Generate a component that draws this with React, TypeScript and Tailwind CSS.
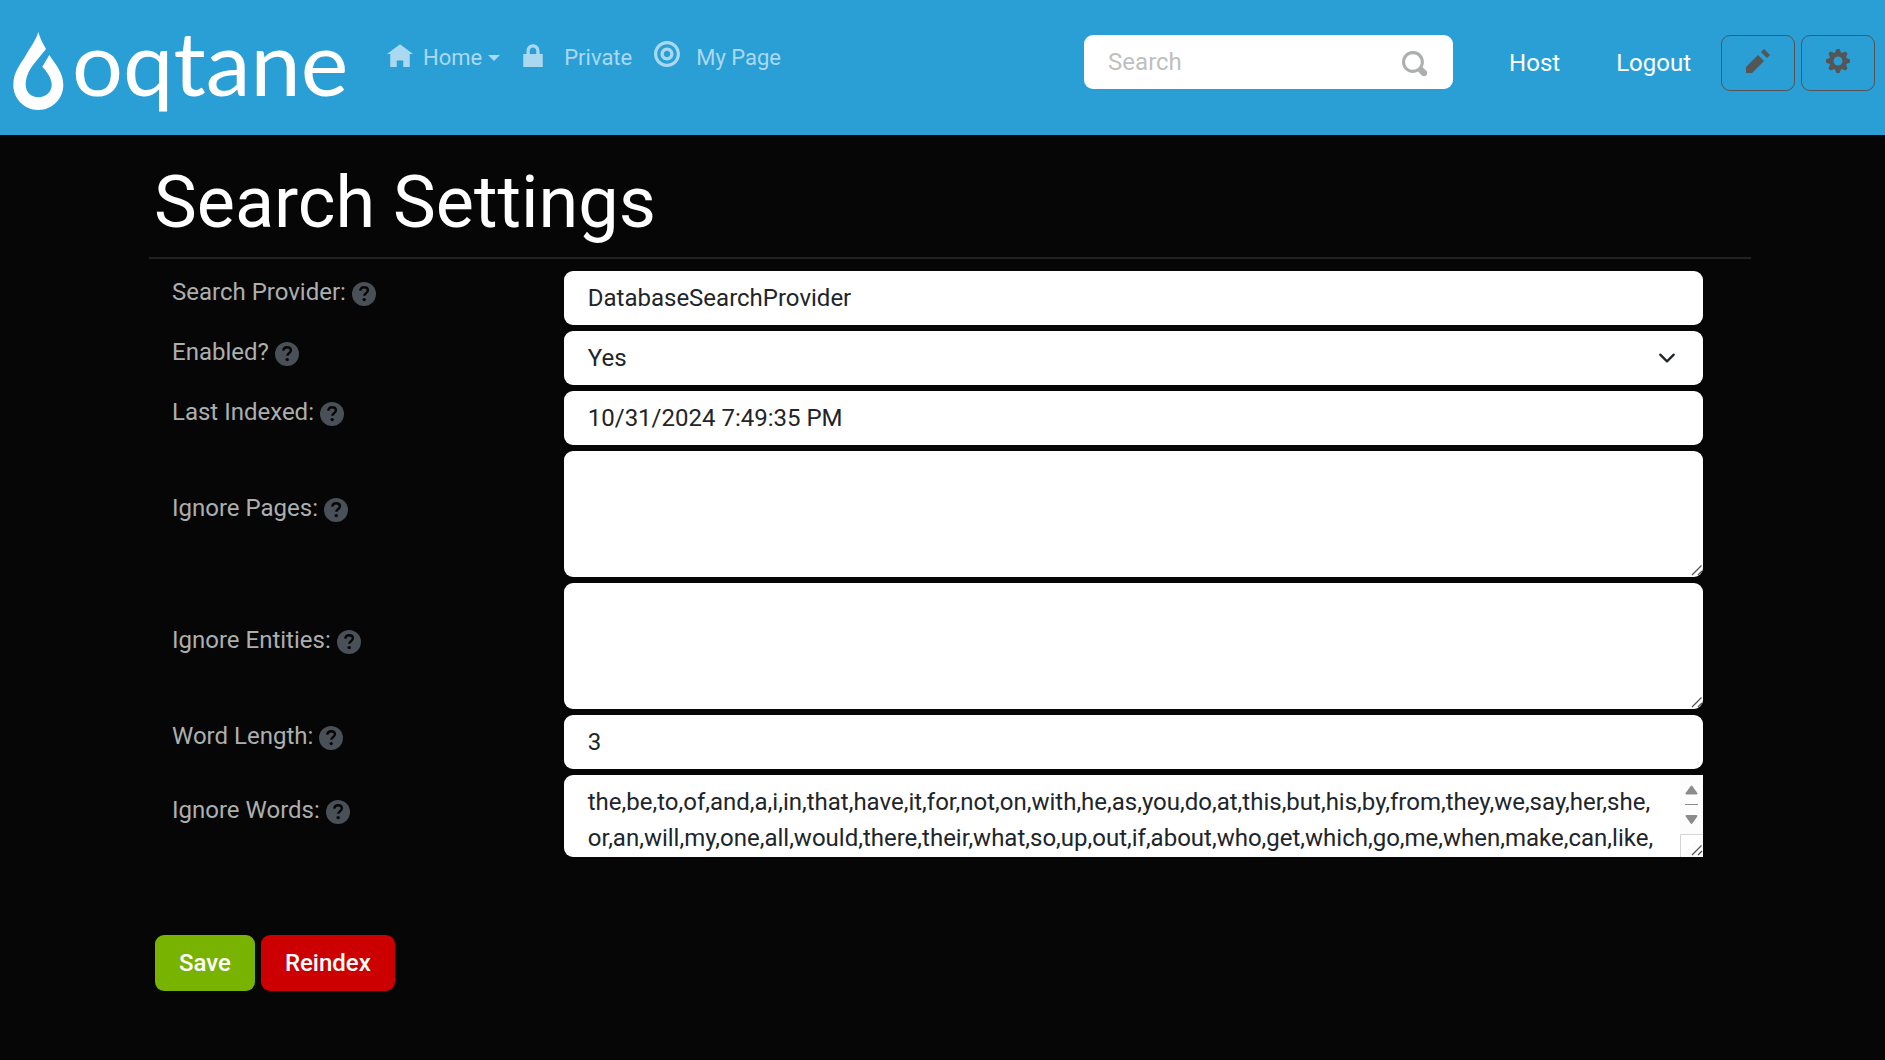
import type { ReactNode } from 'react';

const ICONS = {
  home: 'M4 1l-4 3h1v4h2v-2h2v2h2v-4.03l1 .03-4-3z',
  lock: 'M4 1c-1.1 0-2 .9-2 2v1h-1v4h6v-4h-1v-1c0-1.1-.9-2-2-2zm0 1c.56 0 1 .44 1 1v1h-2v-1c0-.56.44-1 1-1z',
  target:
    'M4 0c-2.2 0-4 1.8-4 4s1.8 4 4 4 4-1.8 4-4-1.8-4-4-4zm0 1c1.66 0 3 1.34 3 3s-1.34 3-3 3-3-1.34-3-3 1.34-3 3-3zm0 1c-1.1 0-2 .9-2 2s.9 2 2 2 2-.9 2-2-.9-2-2-2zm0 1c.56 0 1 .44 1 1s-.44 1-1 1-1-.44-1-1 .44-1 1-1z',
  search:
    'M3.5 0c-1.93 0-3.5 1.57-3.5 3.5s1.57 3.5 3.5 3.5c.59 0 1.17-.14 1.66-.41a1 1 0 0 0 .13.13l1 1a1.02 1.02 0 1 0 1.44-1.44l-1-1a1 1 0 0 0-.16-.13c.27-.49.44-1.06.44-1.66 0-1.93-1.55-3.5-3.5-3.5zm0 1c1.39 0 2.5 1.11 2.5 2.5 0 .66-.24 1.27-.66 1.72-.01.01-.02.02-.03.03a1 1 0 0 0-.13.13c-.44.4-1.04.63-1.69.63-1.39 0-2.5-1.11-2.5-2.5s1.11-2.5 2.5-2.5z',
  pencil: 'M6 0l-1 1 2 2 1-1-2-2zm-2 2l-4 4v2h2l4-4-2-2z',
  cog: 'M3.5 0l-.5 1.19c-.1.03-.19.08-.28.13l-1.19-.5-.72.72.5 1.19c-.05.1-.09.18-.13.28l-1.19.5v1l1.19.5c.04.1.08.18.13.28l-.5 1.19.72.72 1.19-.5c.09.04.18.09.28.13l.5 1.19h1l.5-1.19c.09-.04.19-.08.28-.13l1.19.5.72-.72-.5-1.19c.04-.09.09-.19.13-.28l1.19-.5v-1l-1.19-.5c-.03-.09-.08-.19-.13-.28l.5-1.19-.72-.72-1.19.5c-.09-.04-.19-.09-.28-.13l-.5-1.19h-1zm.5 2.5c.83 0 1.5.67 1.5 1.5s-.67 1.5-1.5 1.5-1.5-.67-1.5-1.5.67-1.5 1.5-1.5z',
};

function Icon({ name, className }: { name: keyof typeof ICONS; className: string }) {
  return (
    <svg viewBox="0 0 8 8" fill="currentColor" aria-hidden="true" className={className}>
      <path d={ICONS[name]} />
    </svg>
  );
}

function HelpIcon() {
  return (
    <svg viewBox="0 0 24 24" aria-hidden="true" className="size-6 shrink-0">
      <circle cx="12" cy="12" r="12" fill="#495057" />
      <path
        d="M8.2 8.6C8.6 6.4 10 5.2 12.1 5.2c2.2 0 3.8 1.3 3.8 3.1 0 1.4-.8 2.2-1.9 2.9-1.2.8-1.7 1.3-1.7 2.6"
        fill="none"
        stroke="#060606"
        strokeWidth="2.4"
      />
      <circle cx="12.2" cy="17.6" r="1.7" fill="#060606" />
    </svg>
  );
}

function Logo() {
  return (
    <a href="#" aria-label="oqtane" className="flex h-[135px] w-[347px] shrink-0 items-start pl-3 pt-8 text-white">
      <svg viewBox="0 0 52 78" fill="currentColor" aria-hidden="true" className="h-[78px] w-[52px] shrink-0">
        <path d="M26.3 0C28 6 31 12 34 17L21 33C16 40 13.700 46 13.700 53C13.700 60 19 65.300 26.300 65.300S39.700 60 39.700 53C39.700 46 35 40 30.300 34.700L37.300 23C43 32 51.300 40 51.300 53C51.300 67 40 78 26.300 78S1.300 67 1.300 53C1.300 40 8 33 14 23C19 14 24 8 26.300 0z" />
      </svg>
      <span className="ml-2 mt-[-15px] font-['Lato'] text-[90px] leading-[88px]">oqtane</span>
    </a>
  );
}

function Grip() {
  return (
    <svg
      viewBox="0 0 12 12"
      aria-hidden="true"
      className="pointer-events-none absolute bottom-px right-0 size-3"
      fill="none"
      stroke="#555555"
      strokeWidth="1.3"
    >
      <path d="M1 11L10.500 1.500M7 11L11 7" />
    </svg>
  );
}

function Row({ id, label, children }: { id: string; label: string; children: ReactNode }) {
  return (
    <div className="grid grid-cols-[1fr_3fr] items-center gap-3">
      <label htmlFor={id} className="flex items-center gap-[6px] pb-3 text-[#adafae]">
        {label}
        <span className="pt-1">
          <HelpIcon />
        </span>
      </label>
      <div className="relative flex">{children}</div>
    </div>
  );
}

const field = 'block w-full rounded-[9px] bg-white px-6 text-2xl leading-9 text-[#212529] outline-none';

const WORDS =
  'the,be,to,of,and,a,i,in,that,have,it,for,not,on,with,he,as,you,do,at,this,but,his,by,from,they,we,say,her,she,or,an,will,my,one,all,would,there,their,what,so,up,out,if,about,who,get,which,go,me,when,make,can,like,';

export default function App() {
  return (
    <div className="min-h-screen bg-[#060606] font-['Roboto',sans-serif] text-2xl leading-9 text-[#adafae]">
      <header className="flex h-[135px] items-start bg-[#2a9fd6]">
        <Logo />
        <nav className="flex items-start pl-10 pt-10 text-[22px] text-[#aad9ef]">
          <a href="#" className="flex items-center">
            <Icon name="home" className="mb-2 size-[26px]" />
            <span className="ml-[10px]">Home</span>
            <span className="ml-[6px] border-x-[6px] border-t-[6px] border-x-transparent border-t-current" />
          </a>
          <a href="#" className="ml-5 flex items-center">
            <Icon name="lock" className="mb-2 size-[26px]" />
            <span className="ml-[18px]">Private</span>
          </a>
          <a href="#" className="ml-[22px] flex items-center">
            <Icon name="target" className="mb-2 size-[26px]" />
            <span className="ml-4">My Page</span>
          </a>
        </nav>
        <div className="ml-auto flex items-start pr-[10px] pt-[35px] text-white">
          <form className="relative w-[369px]" onSubmit={(e) => e.preventDefault()}>
            <input
              type="search"
              aria-label="Search"
              placeholder="Search"
              className="block h-[54px] w-full rounded-[9px] bg-white pl-6 pr-16 text-2xl text-[#212529] outline-none placeholder:text-[#bfbfbf]"
            />
            <button type="submit" aria-label="Search" className="absolute right-[26px] top-4 text-[#adafae]">
              <Icon name="search" className="size-[25px]" />
            </button>
          </form>
          <a href="#" className="ml-14 mt-[10px]">
            Host
          </a>
          <a href="#" className="ml-14 mt-[10px]">
            Logout
          </a>
          <div className="ml-[30px] flex gap-[6px] text-[#555555]">
            <button
              type="button"
              aria-label="Edit"
              className="flex h-14 w-[74px] justify-center rounded-[9px] border border-[#555555] pt-[13px]"
            >
              <Icon name="pencil" className="size-6" />
            </button>
            <button
              type="button"
              aria-label="Control panel"
              className="flex h-14 w-[74px] justify-center rounded-[9px] border border-[#555555] pt-[13px]"
            >
              <Icon name="cog" className="size-6" />
            </button>
          </div>
        </div>
      </header>

      <main className="pb-16 pl-[149px] pr-[134px] pt-[25px]">
        <h1 className="border-b-2 border-[#222222] pb-[11px] pl-[5px] text-7xl leading-[86px] text-white">
          Search Settings
        </h1>

        <form onSubmit={(e) => e.preventDefault()}>
          <div className="flex flex-col gap-[6px] pl-[23px] pr-12 pt-3">
            <Row id="provider" label="Search Provider:">
              <input id="provider" type="text" defaultValue="DatabaseSearchProvider" className={`${field} h-[54px]`} />
            </Row>
            <Row id="enabled" label="Enabled?">
              <select id="enabled" defaultValue="Yes" className={`${field} h-[54px] appearance-none`}>
                <option>Yes</option>
                <option>No</option>
              </select>
              <svg
                viewBox="0 0 16 16"
                aria-hidden="true"
                className="pointer-events-none absolute right-[27px] top-[18px] size-[18px]"
                fill="none"
                stroke="#212529"
                strokeWidth="2"
                strokeLinecap="round"
                strokeLinejoin="round"
              >
                <path d="m2 5 6 6 6-6" />
              </svg>
            </Row>
            <Row id="indexed" label="Last Indexed:">
              <input id="indexed" type="text" defaultValue="10/31/2024 7:49:35 PM" className={`${field} h-[54px]`} />
            </Row>
            <Row id="pages" label="Ignore Pages:">
              <textarea id="pages" className={`${field} h-[126px] resize-none py-2`} />
              <Grip />
            </Row>
            <Row id="entities" label="Ignore Entities:">
              <textarea id="entities" className={`${field} h-[126px] resize-none py-2`} />
              <Grip />
            </Row>
            <Row id="length" label="Word Length:">
              <input id="length" type="text" defaultValue="3" className={`${field} h-[54px]`} />
            </Row>
            <Row id="words" label="Ignore Words:">
              <textarea
                id="words"
                defaultValue={WORDS}
                className="block h-[82px] w-full resize-none overflow-hidden rounded-l-[9px] bg-white pb-0 pl-6 pr-12 pt-[9px] text-2xl leading-9 text-[#212529] outline-none"
              />
              <svg
                viewBox="0 0 23 82"
                aria-hidden="true"
                className="pointer-events-none absolute right-0 top-0 h-[82px] w-[23px]"
              >
                <path d="M0 0h23v82H0z" fill="#fcfcfc" />
                <path d="M11.500 11.500l5 7h-10zM11.500 48l5-7h-10z" fill="#8b8b8b" stroke="#8b8b8b" strokeWidth="2" strokeLinejoin="round" />
                <path d="M5 29.500h13" stroke="#8b8b8b" />
                <path d="M23 59.500H.5V82" fill="#ffffff" stroke="#d4d4d4" />
              </svg>
              <Grip />
            </Row>
          </div>

          <div className="flex gap-[6px] pl-[6px] pt-[78px] font-medium text-white">
            <button type="submit" className="h-14 rounded-[9px] bg-[#77b300] px-6">
              Save
            </button>
            <button type="button" className="h-14 rounded-[9px] bg-[#cc0000] px-6">
              Reindex
            </button>
          </div>
        </form>
      </main>
    </div>
  );
}
